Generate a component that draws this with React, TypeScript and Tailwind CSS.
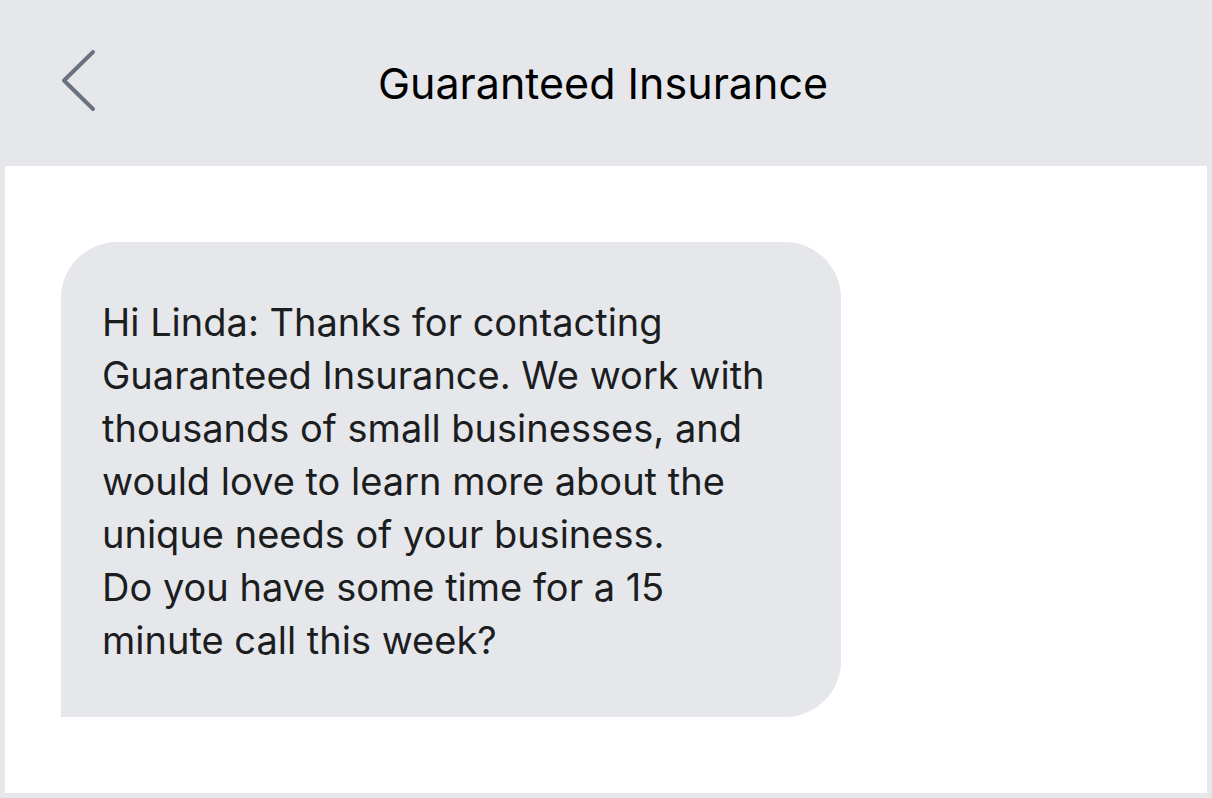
const lines = [
  'Hi Linda: Thanks for contacting',
  'Guaranteed Insurance. We work with',
  'thousands of small businesses, and',
  'would love to learn more about the',
  'unique needs of your business.',
  'Do you have some time for a 15',
  'minute call this week?',
];

export default function App() {
  return (
    <div className="w-[1212px] h-[798px] bg-[#e5e7eb] flex flex-col px-[5px] pb-[5px] font-['Inter',sans-serif]">
      {/* Header */}
      <header className="h-[166px] flex items-center relative shrink-0">
        <button className="absolute left-[54px] top-[46px] text-[#6b7280]">
          <svg width="44" height="68" viewBox="0 0 44 68" fill="none">
            <polyline
              points="34,6 5,34.5 34,63"
              stroke="currentColor"
              strokeWidth="4"
              strokeLinecap="round"
              strokeLinejoin="round"
            />
          </svg>
        </button>
        <h1 className="w-full text-center text-[43px] text-black pr-[6px]">Guaranteed Insurance</h1>
      </header>

      {/* Conversation */}
      <main className="flex-1 bg-white pt-[76px] pl-[56px]">
        <div className="w-[780px] h-[475px] bg-[#e5e7eb] rounded-[56px] rounded-bl-none pl-[41px] pt-[54px]">
          <p className="text-[38px] leading-[53px] text-[#1c1d1f] whitespace-nowrap">
            {lines.map((l, i) => (
              <span key={i} className="block">{l}</span>
            ))}
          </p>
        </div>
      </main>
    </div>
  );
}
